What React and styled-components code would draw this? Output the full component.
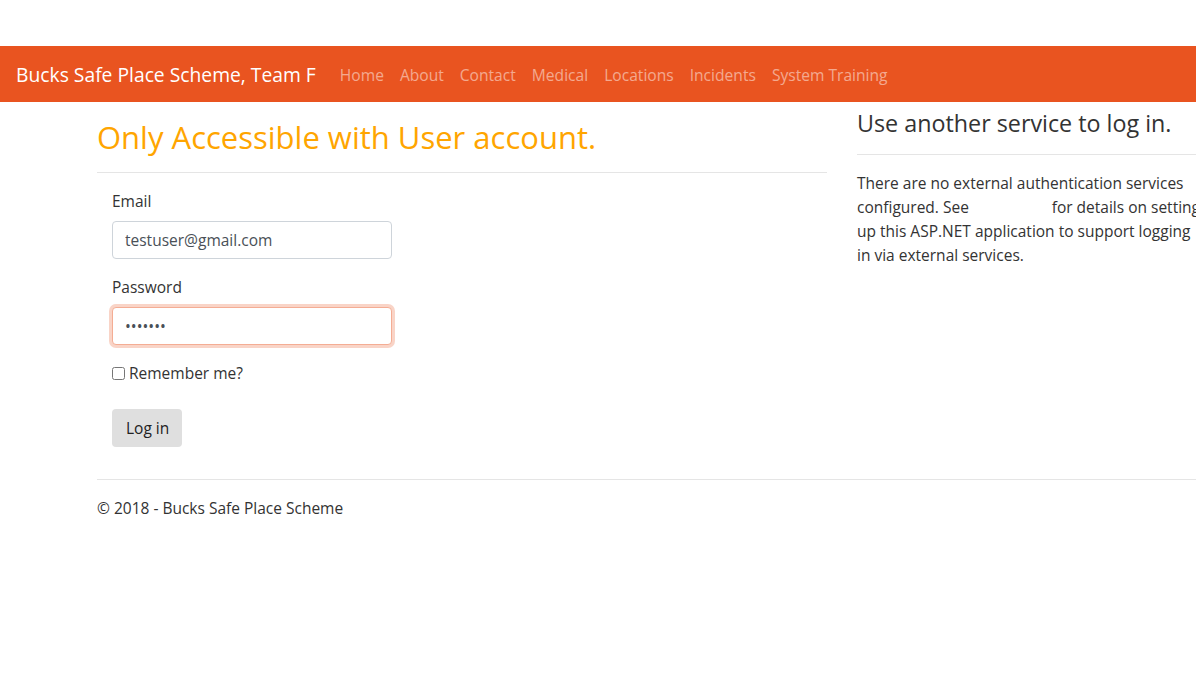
import React from 'react'
import styled, { createGlobalStyle } from 'styled-components'

const GlobalStyle = createGlobalStyle`
  html, body {
    margin: 0;
    padding: 0;
    background: #fff;
    overflow-x: hidden;
  }
  body {
    font-family: "Open Sans", "Noto Sans", sans-serif;
    font-size: 15.5px;
    line-height: 24px;
    color: #333;
  }
  * { box-sizing: border-box; }
`

const Navbar = styled.nav`
  margin-top: 46px;
  height: 56px;
  background-color: #e95420;
  display: flex;
  align-items: center;
  padding: 8px 16px;
`

const Brand = styled.a`
  color: #fff;
  font-size: 19.3px;
  line-height: 30px;
  padding: 6px 0 4px;
  margin-right: 16px;
  white-space: nowrap;
  text-decoration: none;
`

const NavList = styled.ul`
  display: flex;
  list-style: none;
  margin: 0;
  padding: 0;
`

const NavLink = styled.a`
  display: block;
  padding: 9px 8px 7px;
  color: rgba(255, 255, 255, 0.5);
  font-size: 15.6px;
  text-decoration: none;
  white-space: nowrap;
`

const Container = styled.div`
  width: 1140px;
  margin-left: 82px;
  padding: 7px 15px 0;
`

const Row = styled.div`
  display: flex;
  margin: 0 -15px;
`

const Col = styled.div`
  flex: 0 0 ${p => p.$w}px;
  max-width: ${p => p.$w}px;
  padding: 0 15px;
`

const Title = styled.h2`
  margin: 9px 0 8px;
  font-size: 31px;
  font-weight: 400;
  line-height: 38px;
  color: orange;
`

const SubTitle = styled.h4`
  margin: 0 0 8px;
  font-size: 23.3px;
  font-weight: 400;
  line-height: 29px;
  color: #333;
`

const Rule = styled.hr`
  border: 0;
  border-top: 1px solid rgba(0, 0, 0, 0.1);
  margin: ${p => p.$top || 16}px 0 16px;
`

const Form = styled.form`
  padding: 0 15px;
`

const Group = styled.div`
  margin-bottom: ${p => p.$mb ?? 16}px;
`

const Label = styled.label`
  display: block;
  margin-bottom: 8px;
`

const Input = styled.input`
  display: block;
  width: 280px;
  height: 38px;
  padding: 6px 12px;
  font-family: inherit;
  font-size: 15.5px;
  color: #495057;
  border: 1px solid ${p => (p.$focus ? '#f4ad94' : '#ced4da')};
  border-radius: 4px;
  box-shadow: ${p => (p.$focus ? '0 0 0 3px rgba(233, 84, 32, 0.25)' : 'none')};
  outline: none;
  background: #fff;
`

const CheckRow = styled.label`
  display: flex;
  align-items: center;
  gap: 4px;
  input {
    margin: 0;
    width: 13px;
    height: 13px;
  }
`

const Button = styled.button`
  height: 38px;
  padding: 6px 13px 6px 14px;
  font-family: inherit;
  font-size: 15.5px;
  color: #222;
  background: #dfdfdf;
  border: 0;
  border-radius: 4px;
`

const Text = styled.p`
  margin: 0 0 16px;
`

const HiddenLink = styled.a`
  color: #fff;
  text-decoration: none;
`

const Footer = styled.footer`
  p {
    margin: 0;
  }
`

const links = ['Home', 'About', 'Contact', 'Medical', 'Locations', 'Incidents', 'System Training']

export default function App() {
  return (
    <>
      <GlobalStyle />
      <Navbar>
        <Brand href="#">Bucks Safe Place Scheme, Team F</Brand>
        <NavList>
          {links.map(l => (
            <li key={l}><NavLink href="#">{l}</NavLink></li>
          ))}
        </NavList>
      </Navbar>
      <Container>
        <Row>
          <Col $w={760}>
            <Title>Only Accessible with User account.</Title>
            <section>
              <Rule />
              <Form onSubmit={e => e.preventDefault()}>
                <Group>
                  <Label>Email</Label>
                  <Input type="text" defaultValue="testuser@gmail.com" />
                </Group>
                <Group>
                  <Label>Password</Label>
                  <Input type="password" defaultValue="1234567" $focus />
                </Group>
                <Group $mb={24}>
                  <CheckRow>
                    <input type="checkbox" />
                    <span>Remember me?</span>
                  </CheckRow>
                </Group>
                <Group $mb={0}>
                  <Button type="submit">Log in</Button>
                </Group>
              </Form>
            </section>
          </Col>
          <Col $w={380}>
            <SubTitle>Use another service to log in.</SubTitle>
            <Rule />
            <Text>
              There are no external authentication services configured. See{' '}
              <HiddenLink href="#">this article</HiddenLink> for details on setting up this ASP.NET
              application to support logging in via external services.
            </Text>
          </Col>
        </Row>
        <Rule $top={32} />
        <Footer>
          <p>&copy; 2018 - Bucks Safe Place Scheme</p>
        </Footer>
      </Container>
    </>
  )
}
